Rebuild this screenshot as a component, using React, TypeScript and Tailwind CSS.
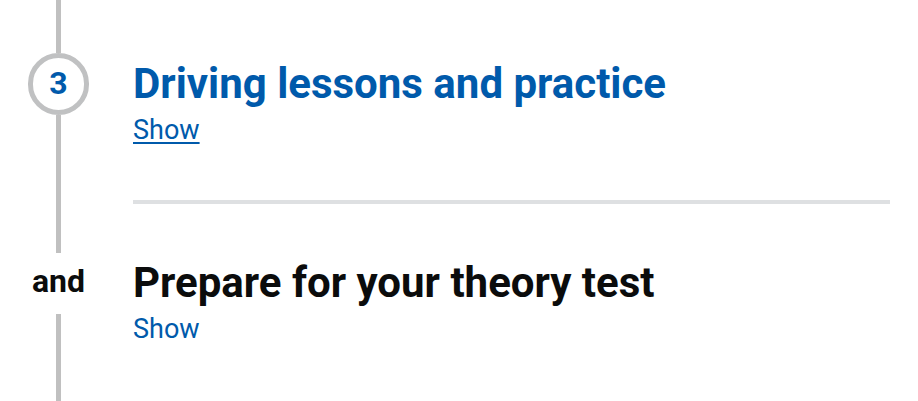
type Step = { id: string; marker: string; title: string; active: boolean };

const steps: Step[] = [
  { id: "lessons", marker: "3", title: "Driving lessons and practice", active: true },
  { id: "theory", marker: "and", title: "Prepare for your theory test", active: false },
];

function Marker({ step }: { step: Step }) {
  const numbered = /^\d+$/.test(step.marker);
  return (
    <div className="flex w-[61px] shrink-0 flex-col items-center">
      <div className="h-[53px] w-[5px] bg-[#c0c0c0]" />
      <span
        className={
          numbered
            ? "flex h-[62px] w-full items-center justify-center rounded-full border-[5px] border-[#c0c1c2] pb-0.5 text-[32px] leading-8 font-bold text-[#005aab]"
            : "flex h-[61px] items-center pb-1.5 text-[32px] leading-8 font-bold text-[#0b0c0c]"
        }
      >
        {step.marker}
      </span>
      <div className="w-[5px] grow bg-[#c0c0c0]" />
    </div>
  );
}

function StepItem({ step, first }: { step: Step; first: boolean }) {
  return (
    <li className="flex gap-11 last:grow">
      <Marker step={step} />
      <div className={first ? "grow pt-[60px] pb-12" : "grow border-t-4 border-[#dee0e2] pt-[55px]"}>
        <h2>
          <button type="button" aria-expanded="false" className="block w-full cursor-pointer text-left">
            <span
              className={
                step.active
                  ? "block text-[42px] leading-[48px] font-bold text-[#005aab]"
                  : "block text-[42px] leading-[48px] font-bold text-[#0b0c0c]"
              }
            >
              {step.title}
            </span>
            <span
              className={
                step.active
                  ? "block text-[27px] leading-[44px] text-[#005aab] underline decoration-2 underline-offset-3"
                  : "block text-[27px] leading-[44px] text-[#005aab]"
              }
            >
              Show
            </span>
          </button>
        </h2>
      </div>
    </li>
  );
}

export default function App() {
  return (
    <ol className="flex min-h-screen flex-col bg-white px-7 font-['Roboto',sans-serif]">
      {steps.map((step, i) => (
        <StepItem key={step.id} step={step} first={i === 0} />
      ))}
    </ol>
  );
}
